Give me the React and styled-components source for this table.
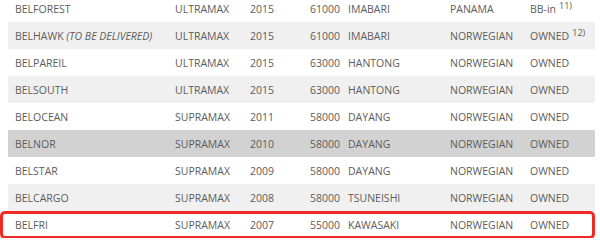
import React from "react";
import styled, { createGlobalStyle } from "styled-components";

const Global = createGlobalStyle`
  html, body { margin: 0; padding: 0; background: #fff; overflow: hidden; }
  body { font-family: "Open Sans", "Liberation Sans", sans-serif; }
`;

const Page = styled.div`
  padding: 0 5px 0 8px;
  margin-top: -5px;
`;

const Row = styled.div`
  position: relative;
  display: grid;
  grid-template-columns: 160px 75px 60px 38px 102px 80px 72px;
  height: 27px;
  align-items: center;
  background: ${(p) => (p.$tone === "dark" ? "#d2d2d2" : p.$tone === "light" ? "#f0f0f0" : "#ffffff")};
  ${(p) =>
    p.$marked &&
    `
    &::after {
      content: "";
      position: absolute;
      left: -8px;
      right: 0;
      top: 0;
      bottom: -1px;
      border: 3px solid #ee2a24;
      border-radius: 5px;
      pointer-events: none;
    }
  `}
`;

const Cell = styled.div`
  padding-left: 7px;
  font-size: 10.5px;
  color: #5c5c5c;
  white-space: nowrap;
`;

const Note = styled.em`
  font-style: italic;
  color: #5c5c5c;
`;

const Sup = styled.sup`
  font-size: 9px;
  vertical-align: 4px;
  line-height: 0;
  margin-left: 3px;
`;

const rows = [
  ["BELFOREST", null, "ULTRAMAX", "2015", "61000", "IMABARI", "PANAMA", "BB-in", "11)"],
  ["BELHAWK", "(TO BE DELIVERED)", "ULTRAMAX", "2015", "61000", "IMABARI", "NORWEGIAN", "OWNED", "12)"],
  ["BELPAREIL", null, "ULTRAMAX", "2015", "63000", "HANTONG", "NORWEGIAN", "OWNED"],
  ["BELSOUTH", null, "ULTRAMAX", "2015", "63000", "HANTONG", "NORWEGIAN", "OWNED"],
  ["BELOCEAN", null, "SUPRAMAX", "2011", "58000", "DAYANG", "NORWEGIAN", "OWNED"],
  ["BELNOR", null, "SUPRAMAX", "2010", "58000", "DAYANG", "NORWEGIAN", "OWNED"],
  ["BELSTAR", null, "SUPRAMAX", "2009", "58000", "DAYANG", "NORWEGIAN", "OWNED"],
  ["BELCARGO", null, "SUPRAMAX", "2008", "58000", "TSUNEISHI", "NORWEGIAN", "OWNED"],
  ["BELFRI", null, "SUPRAMAX", "2007", "55000", "KAWASAKI", "NORWEGIAN", "OWNED"],
];

export default function App() {
  return (
    <>
      <Global />
      <Page>
        {rows.map((r, i) => {
          const [name, note, type, year, dwt, yard, flag, own, sup] = r;
          const tone = name === "BELNOR" ? "dark" : i % 2 === 1 ? "light" : "white";
          return (
            <Row key={name} $tone={tone} $marked={name === "BELFRI"}>
              <Cell>
                {name}
                {note && <> <Note>{note}</Note></>}
              </Cell>
              <Cell>{type}</Cell>
              <Cell>{year}</Cell>
              <Cell>{dwt}</Cell>
              <Cell>{yard}</Cell>
              <Cell>{flag}</Cell>
              <Cell>
                {own}
                {sup && <Sup>{sup}</Sup>}
              </Cell>
            </Row>
          );
        })}
      </Page>
    </>
  );
}
